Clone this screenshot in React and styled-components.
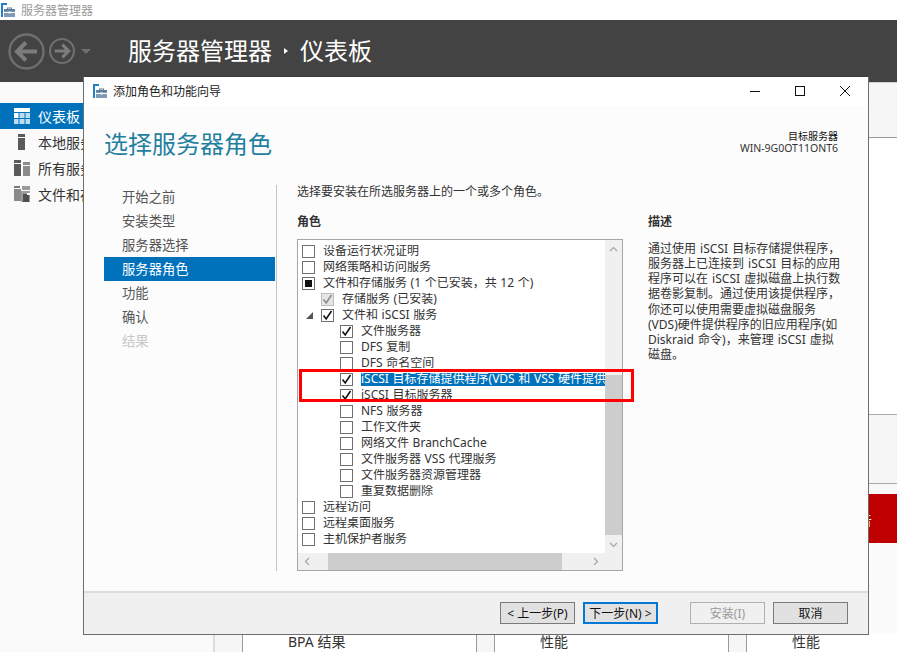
import React from "react";
import styled, { createGlobalStyle } from "styled-components";

const Global = createGlobalStyle`
  html, body { margin: 0; padding: 0; background: #fafafa; }
  body { font-family: "Noto Sans", "Noto Sans CJK SC", "Liberation Sans", sans-serif; font-size: 12px; color: #333; }
  * { box-sizing: border-box; }
`;

const Page = styled.div`
  position: relative;
  width: 897px;
  height: 652px;
  overflow: hidden;
  display: flex;
  flex-direction: column;
  background: #fafafa;
`;

const AppBar = styled.div`
  height: 20px;
  flex: none;
  background: #fff;
  display: flex;
  align-items: center;
  gap: 6px;
  padding-left: 1px;
  font-size: 12px;
  color: #9a9a9a;
`;

const Header = styled.header`
  height: 62px;
  flex: none;
  background: #434343;
  display: flex;
  align-items: center;
`;

const NavButtons = styled.div`
  width: 128px;
  flex: none;
  display: flex;
  align-items: center;
  padding-left: 8px;
`;

const Crumb = styled.div`
  display: flex;
  align-items: center;
  font-size: 24px;
  line-height: 30px;
  color: #fff;
  gap: 12px;
`;

const CrumbArrow = styled.span`
  width: 0;
  height: 0;
  border-left: 4px solid #fff;
  border-top: 3.5px solid transparent;
  border-bottom: 3.5px solid transparent;
`;

const Workspace = styled.div`
  flex: 1;
  min-height: 0;
  display: flex;
`;

const Sidebar = styled.nav`
  width: 215px;
  flex: none;
  padding-top: 21px;
  background: #fafafa;
  border-right: 2px solid #dcdcdc;
`;

const SideItem = styled.div`
  height: 26px;
  display: flex;
  align-items: center;
  padding-left: 14px;
  gap: 8px;
  font-size: 14px;
  white-space: nowrap;
  background: ${(p) => (p.$active ? "#0072bc" : "transparent")};
  color: ${(p) => (p.$active ? "#fff" : "#333")};
`;

const Main = styled.main`
  flex: 1;
  min-width: 0;
  display: flex;
  flex-direction: column;
  background: #f6f6f6;
`;

const TopBand = styled.div`
  height: 56px;
  flex: none;
  border-top: 1px solid #cfcfcf;
  border-bottom: 1px solid #9c9c9c;
  background: #f6f6f6;
`;

const WhitePanel = styled.div`
  height: 277px;
  flex: none;
  background: #fff;
  border-bottom: 1px solid #a8a8a8;
`;

const NoticeBand = styled.div`
  height: 69px;
  flex: none;
  background: #f6f6f6;
  border-bottom: 1px solid #a8a8a8;
`;

const AlertGap = styled.div`
  height: 10px;
  flex: none;
  background: #f8f8f8;
`;

const Alert = styled.div`
  height: 49px;
  flex: none;
  background: #c00000;
  color: #fff;
  display: flex;
  align-items: center;
  justify-content: flex-end;
  font-size: 14px;
  overflow: hidden;
  white-space: nowrap;
  padding-right: 25px;
`;

const Spread = styled.div`
  flex: 1;
  background: #fbfbfb;
`;

const Cards = styled.div`
  height: 18px;
  flex: none;
  display: flex;
  gap: 17px;
  padding-left: 27px;
  background: #f6f6f6;
`;

const Card = styled.div`
  width: ${(p) => p.$width}px;
  flex: none;
  background: #fff;
  border-left: 1px solid #9a9a9a;
  border-right: 1px solid #9a9a9a;
  padding-left: 45px;
  font-size: 14px;
  line-height: 16px;
  color: #333;
`;

/* dialog */
const Dialog = styled.section`
  position: absolute;
  left: 83px;
  top: 76px;
  width: 786px;
  height: 559px;
  border: 1px solid #6e6e6e;
  border-top-color: #3a3a3a;
  background: #fcfcfc;
  display: flex;
  flex-direction: column;
`;

const TitleBar = styled.div`
  height: 29px;
  flex: none;
  background: #fff;
  display: flex;
  align-items: center;
  padding: 0 0 2px 9px;
  gap: 6px;
  font-size: 12px;
  color: #222;
`;

const WinControls = styled.div`
  margin-left: auto;
  display: flex;
  align-items: center;
  padding-right: 18px;
  gap: 35px;
`;

const DialogBody = styled.div`
  flex: 1;
  min-height: 0;
  display: flex;
  flex-direction: column;
  padding: 0 20px 20px 20px;
`;

const DialogHead = styled.div`
  height: 79px;
  flex: none;
  display: flex;
  justify-content: space-between;
  padding-top: 22px;
`;

const Heading = styled.h1`
  margin: 0;
  font-size: 24px;
  line-height: 32px;
  font-weight: 400;
  color: #1f7f9f;
`;

const Target = styled.div`
  text-align: right;
  padding: 2px 10px 0 0;
  font-size: 10px;
  line-height: 12px;
  color: #111;
`;

const TargetName = styled.div`
  font-size: 10.5px;
  color: #333;
`;

const Columns = styled.div`
  flex: 1;
  min-height: 0;
  display: flex;
`;

const StepList = styled.div`
  width: 173px;
  flex: none;
  border-right: 1px solid #c4c4c4;
`;

const Step = styled.div`
  height: 24px;
  width: 171px;
  display: flex;
  align-items: center;
  padding: 0 0 2px 18px;
  font-size: 13.33px;
  background: ${(p) => (p.$active ? "#0072bc" : "transparent")};
  color: ${(p) => (p.$active ? "#fff" : p.$disabled ? "#c8c8c8" : "#555")};
`;

const Content = styled.div`
  flex: 1;
  min-width: 0;
  padding-left: 20px;
  display: flex;
  flex-direction: column;
`;

const Intro = styled.div`
  height: 13px;
  line-height: 13px;
  font-size: 12px;
  color: #333;
`;

const ContentGrid = styled.div`
  flex: 1;
  min-height: 0;
  display: flex;
  gap: 25px;
  padding-top: 16px;
`;

const RoleColumn = styled.div`
  width: 326px;
  flex: none;
  display: flex;
  flex-direction: column;
`;

const Label = styled.div`
  height: 25px;
  line-height: 16px;
  font-size: 12px;
  font-weight: 700;
  color: #333;
`;

const RoleBox = styled.div`
  flex: 1;
  min-height: 0;
  border: 1px solid #a6a6a6;
  display: grid;
  grid-template-columns: 1fr 17px;
  grid-template-rows: 1fr 17px;
  background: #fff;
`;

const RoleScroll = styled.div`
  overflow: hidden;
  padding-top: 3px;
`;

const Row = styled.div`
  height: 16px;
  display: flex;
  align-items: center;
  padding-left: ${(p) => 4 + p.$level * 19}px;
  white-space: nowrap;
  font-size: 12px;
  word-spacing: 0.5px;
  color: #333;
`;

const Twisty = styled.span`
  width: 0;
  height: 0;
  margin-left: -15px;
  margin-right: 8px;
  border-style: solid;
  border-width: 0 0 7px 7px;
  border-color: transparent transparent #555 transparent;
`;

const Box = styled.span`
  width: 13px;
  height: 13px;
  flex: none;
  margin-right: 8px;
  border: 1px solid ${(p) => (p.$disabled ? "#bdbdbd" : "#707070")};
  background: ${(p) => (p.$disabled ? "#e6e6e6" : "#fff")};
  display: flex;
  align-items: center;
  justify-content: center;
`;

const Mixed = styled.span`
  width: 7px;
  height: 7px;
  background: #111;
`;

const RowText = styled.span`
  flex: 1;
  min-width: 0;
  height: 13px;
  line-height: 11px;
  overflow: hidden;
  background: ${(p) => (p.$selected ? "#0072bc" : "transparent")};
  color: ${(p) => (p.$selected ? "#fff" : "inherit")};
`;

const VBar = styled.div`
  background: #f0f0f0;
  display: flex;
  flex-direction: column;
  align-items: center;
  justify-content: space-between;
  position: relative;
  padding: 5px 0 4px;
`;

const VThumb = styled.div`
  position: absolute;
  left: 0;
  right: 0;
  top: ${(p) => p.$top}px;
  height: ${(p) => p.$height}px;
  background: #cdcdcd;
`;

const HBar = styled.div`
  background: #f0f0f0;
  display: flex;
  align-items: center;
  justify-content: space-between;
  position: relative;
  padding: 0 5px;
`;

const HThumb = styled.div`
  position: absolute;
  top: 0;
  bottom: 0;
  left: ${(p) => p.$left}px;
  width: ${(p) => p.$width}px;
  background: #cdcdcd;
`;

const Corner = styled.div`
  background: #f0f0f0;
`;

const Describe = styled.div`
  width: 200px;
  flex: none;
`;

const DescBody = styled.div`
  margin-top: 2px;
`;

const DescLine = styled.div`
  height: 15.15px;
  line-height: 16px;
  font-size: 12px;
  word-spacing: 1px;
  white-space: nowrap;
  color: #333;
`;

const Footer = styled.footer`
  height: 43px;
  flex: none;
  border-top: 2px solid #dcdcdc;
  background: #f0f0f0;
  display: flex;
  align-items: flex-start;
  padding: 9px 20px 0 416px;
`;

const Btn = styled.div`
  width: 75px;
  height: 22px;
  margin-left: ${(p) => p.$gap || 0}px;
  display: flex;
  align-items: center;
  justify-content: center;
  font-size: 12px;
  border: 1px solid ${(p) => (p.$primary ? "#0078d7" : p.$disabled ? "#b0b0b0" : "#7a7a7a")};
  background: ${(p) => (p.$disabled ? "#f0f0f0" : "#e1e1e1")};
  color: ${(p) => (p.$disabled ? "#9a9a9a" : "#111")};
  box-shadow: ${(p) => (p.$primary ? "inset 0 0 0 1px #0078d7" : "none")};
`;

const Annotation = styled.div`
  position: absolute;
  left: 299px;
  top: 369px;
  width: 335px;
  height: 33px;
  border: 3px solid #ff0000;
  pointer-events: none;
`;

const ServerIcon = () => (
  <svg width="14" height="14" viewBox="0 0 14 14" style={{ flex: "none" }}>
    <rect x="0" y="0" width="6" height="2" fill="#1f80c8" />
    <rect x="0" y="2" width="2" height="12" fill="#1f80c8" />
    <path d="M3 6h11v8H3z" fill="#7e9ab6" />
    <path d="M3 6h11v2H3z" fill="#5f7f9e" />
    <path d="M6 4.5h5V6h-1V5.5H7V6H6z" fill="#5f7f9e" />
    <rect x="3" y="9" width="11" height="1" fill="#fff" />
    <rect x="7.5" y="8.5" width="2" height="2" fill="#fff" />
  </svg>
);

const DashIcon = () => (
  <svg width="16" height="16" viewBox="0 0 16 16" style={{ flex: "none" }}>
    <rect x="0" y="0" width="16" height="4" fill="#fff" />
    <rect x="0" y="5" width="4.5" height="5" fill="#fff" />
    <rect x="5.5" y="5" width="5" height="5" fill="#bcdcf2" />
    <rect x="11.5" y="5" width="4.5" height="5" fill="#bcdcf2" />
    <rect x="0" y="11" width="4.5" height="5" fill="#bcdcf2" />
    <rect x="5.5" y="11" width="5" height="5" fill="#bcdcf2" />
    <rect x="11.5" y="11" width="4.5" height="5" fill="#bcdcf2" />
  </svg>
);

const LocalIcon = () => (
  <svg width="16" height="16" viewBox="0 0 16 16" style={{ flex: "none" }}>
    <rect x="4" y="0" width="7" height="3" fill="#5a5a5a" />
    <rect x="4" y="4" width="7" height="12" fill="#5a5a5a" />
  </svg>
);

const AllIcon = () => (
  <svg width="16" height="16" viewBox="0 0 16 16" style={{ flex: "none" }}>
    <rect x="0" y="0" width="7" height="3" fill="#5a5a5a" />
    <rect x="0" y="4" width="7" height="12" fill="#5a5a5a" />
    <rect x="9" y="2" width="7" height="3" fill="#8a8a8a" />
    <rect x="9" y="6" width="7" height="10" fill="#8a8a8a" />
  </svg>
);

const FileIcon = () => (
  <svg width="16" height="16" viewBox="0 0 16 16" style={{ flex: "none" }}>
    <path d="M0 0h6v2H0z" fill="#7a7a7a" />
    <path d="M8 0h8v4H8z" fill="#9a9a9a" />
    <path d="M0 3h7v12H0z" fill="#8a8a8a" />
    <path d="M7 5h9v11H7z" fill="#9a9a9a" />
    <path d="M9 8h6v8H9z" fill="#4f4f4f" />
    <path d="M13 7h3v2h-3z" fill="#fafafa" />
  </svg>
);

const NavCircle = ({ size, dir, margin = 0 }) => (
  <svg width={size} height={size} viewBox="0 0 37 37" style={{ flex: "none", marginLeft: margin }}>
    <circle cx="18.5" cy="18.5" r="17" fill="none" stroke="#6f6f6f" strokeWidth={size > 30 ? 2.4 : 3} />
    <path
      d={dir === "left" ? "M29 18.5H9M18 9.5l-9 9 9 9" : "M8 18.5h20M19 9.5l9 9-9 9"}
      fill="none"
      stroke="#7c7c7c"
      strokeWidth={size > 30 ? 4 : 4.5}
    />
  </svg>
);

const Caret = () => (
  <svg width="10" height="5" viewBox="0 0 10 5" style={{ flex: "none", marginLeft: 6 }}>
    <path d="M0 0h10L5 5z" fill="#6f6f6f" />
  </svg>
);

const Check = ({ color = "#111" }) => (
  <svg width="11" height="11" viewBox="0 0 11 11">
    <path d="M1.5 5.5L4.2 9 9.5 1" fill="none" stroke={color} strokeWidth="1.6" />
  </svg>
);

const Chevron = ({ d }) => (
  <svg width="9" height="9" viewBox="0 0 9 9" style={{ position: "relative", flex: "none" }}>
    <path d={d} fill="none" stroke="#a6a6a6" strokeWidth="1.2" />
  </svg>
);

const roles = [
  { t: "设备运行状况证明", l: 0 },
  { t: "网络策略和访问服务", l: 0 },
  { t: "文件和存储服务 (1 个已安装，共 12 个)", l: 0, s: "mixed" },
  { t: "存储服务 (已安装)", l: 1, s: "disabled" },
  { t: "文件和 iSCSI 服务", l: 1, s: "on", tw: true },
  { t: "文件服务器", l: 2, s: "on" },
  { t: "DFS 复制", l: 2 },
  { t: "DFS 命名空间", l: 2 },
  { t: "iSCSI 目标存储提供程序(VDS 和 VSS 硬件提供程序)", l: 2, s: "on", sel: true },
  { t: "iSCSI 目标服务器", l: 2, s: "on" },
  { t: "NFS 服务器", l: 2 },
  { t: "工作文件夹", l: 2 },
  { t: "网络文件 BranchCache", l: 2 },
  { t: "文件服务器 VSS 代理服务", l: 2 },
  { t: "文件服务器资源管理器", l: 2 },
  { t: "重复数据删除", l: 2 },
  { t: "远程访问", l: 0 },
  { t: "远程桌面服务", l: 0 },
  { t: "主机保护者服务", l: 0 },
];

const desc = [
  "通过使用 iSCSI 目标存储提供程序，",
  "服务器上已连接到 iSCSI 目标的应用",
  "程序可以在 iSCSI 虚拟磁盘上执行数",
  "据卷影复制。通过使用该提供程序，",
  "你还可以使用需要虚拟磁盘服务",
  "(VDS)硬件提供程序的旧应用程序(如",
  "Diskraid 命令)，来管理 iSCSI 虚拟",
  "磁盘。",
];

const steps = ["开始之前", "安装类型", "服务器选择", "服务器角色", "功能", "确认", "结果"];

export default function App() {
  return (
    <Page>
      <Global />
      <AppBar>
        <ServerIcon />
        服务器管理器
      </AppBar>
      <Header>
        <NavButtons>
          <NavCircle size={37} dir="left" />
          <NavCircle size={26} dir="right" margin={4} />
          <Caret />
        </NavButtons>
        <Crumb>
          服务器管理器
          <CrumbArrow />
          仪表板
        </Crumb>
      </Header>
      <Workspace>
        <Sidebar>
          <SideItem $active><DashIcon />仪表板</SideItem>
          <SideItem><LocalIcon />本地服务器</SideItem>
          <SideItem><AllIcon />所有服务器</SideItem>
          <SideItem><FileIcon />文件和存储服务</SideItem>
        </Sidebar>
        <Main>
          <TopBand />
          <WhitePanel />
          <NoticeBand />
          <AlertGap />
          <Alert>可管理性警告</Alert>
          <Spread />
          <Cards>
            <Card $width={235}>BPA 结果</Card>
            <Card $width={235}>性能</Card>
            <Card $width={235}>性能</Card>
          </Cards>
        </Main>
      </Workspace>

      <Dialog>
        <TitleBar>
          <ServerIcon />
          添加角色和功能向导
          <WinControls>
            <svg width="10" height="10" viewBox="0 0 10 10"><path d="M0 5.5h10" stroke="#111" strokeWidth="1" /></svg>
            <svg width="10" height="10" viewBox="0 0 10 10"><rect x=".5" y=".5" width="9" height="9" fill="none" stroke="#111" /></svg>
            <svg width="10" height="10" viewBox="0 0 10 10"><path d="M0 0l10 10M10 0L0 10" stroke="#111" strokeWidth="1" /></svg>
          </WinControls>
        </TitleBar>
        <DialogBody>
          <DialogHead>
            <Heading>选择服务器角色</Heading>
            <Target>
              目标服务器
              <TargetName>WIN-9G0OT11ONT6</TargetName>
            </Target>
          </DialogHead>
          <Columns>
            <StepList>
              {steps.map((s, i) => (
                <Step key={s} $active={i === 3} $disabled={i === 6}>{s}</Step>
              ))}
            </StepList>
            <Content>
              <Intro>选择要安装在所选服务器上的一个或多个角色。</Intro>
              <ContentGrid>
                <RoleColumn>
                  <Label>角色</Label>
                  <RoleBox>
                    <RoleScroll>
                      {roles.map((r) => (
                        <Row key={r.t} $level={r.l}>
                          {r.tw && <Twisty />}
                          <Box $disabled={r.s === "disabled"}>
                            {r.s === "on" && <Check />}
                            {r.s === "disabled" && <Check color="#8c8c8c" />}
                            {r.s === "mixed" && <Mixed />}
                          </Box>
                          <RowText $selected={r.sel}>{r.t}</RowText>
                        </Row>
                      ))}
                    </RoleScroll>
                    <VBar>
                      <VThumb $top={135} $height={160} />
                      <Chevron d="M1 6l3.5-3.5L8 6" />
                      <Chevron d="M1 3l3.5 3.5L8 3" />
                    </VBar>
                    <HBar>
                      <HThumb $left={30} $width={234} />
                      <Chevron d="M6 1L2.5 4.5 6 8" />
                      <Chevron d="M3 1l3.5 3.5L3 8" />
                    </HBar>
                    <Corner />
                  </RoleBox>
                </RoleColumn>
                <Describe>
                  <Label>描述</Label>
                  <DescBody>
                    {desc.map((d) => (
                      <DescLine key={d}>{d}</DescLine>
                    ))}
                  </DescBody>
                </Describe>
              </ContentGrid>
            </Content>
          </Columns>
        </DialogBody>
        <Footer>
          <Btn>&lt; 上一步(P)</Btn>
          <Btn $gap={8} $primary>下一步(N) &gt;</Btn>
          <Btn $gap={32} $disabled>安装(I)</Btn>
          <Btn $gap={8}>取消</Btn>
        </Footer>
      </Dialog>
      <Annotation />
    </Page>
  );
}
